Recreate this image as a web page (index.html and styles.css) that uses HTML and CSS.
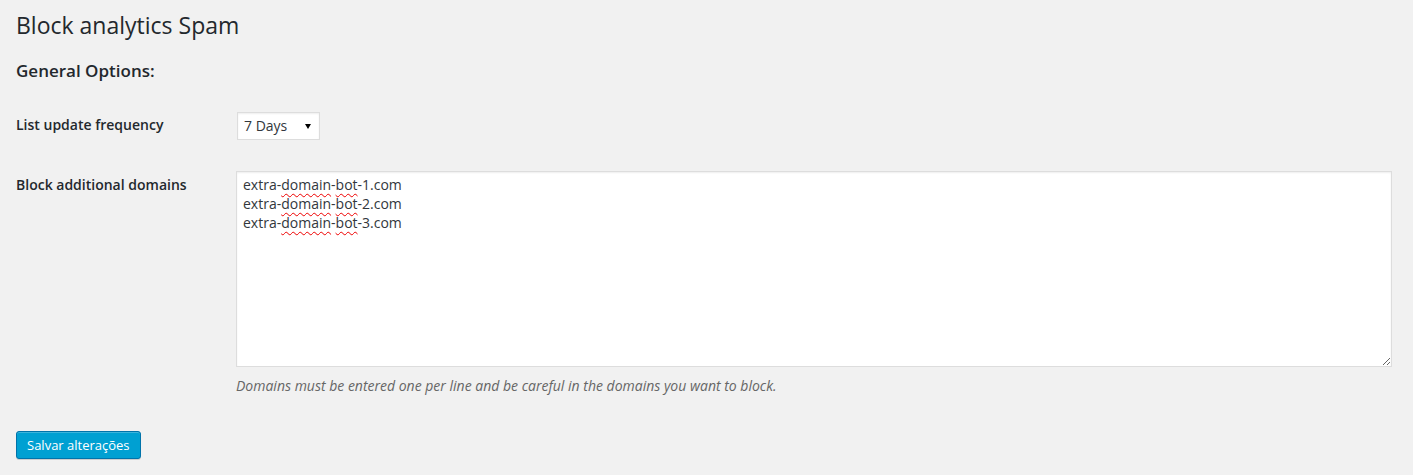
FILE: index.html
```html
<!DOCTYPE html>
<html lang="en">
<head>
    <meta charset="UTF-8">
    <title>Block analytics Spam</title>
    <link rel="stylesheet" href="styles.css">
</head>
<body>
    <div class="wrap">
        <h1>Block analytics Spam</h1>
        <h2>General Options:</h2>
        <form>
            <table class="form-table">
                <tr>
                    <th><label for="frequency">List update frequency</label></th>
                    <td>
                        <span class="select-wrap">
                            <select id="frequency" name="frequency">
                                <option>7 Days</option>
                            </select>
                        </span>
                    </td>
                </tr>
                <tr>
                    <th><label for="domains">Block additional domains</label></th>
                    <td>
                        <div class="textarea" id="domains">
                            <div>extra-<span class="typo">domain</span>-<span class="typo">bot</span>-1.com</div>
                            <div>extra-<span class="typo">domain</span>-<span class="typo">bot</span>-2.com</div>
                            <div>extra-<span class="typo">domain</span>-<span class="typo">bot</span>-3.com</div>
                        </div>
                        <p class="description">Domains must be entered one per line and be careful in the domains you want to block.</p>
                    </td>
                </tr>
            </table>
            <p class="submit">
                <button type="button" class="button-primary">Salvar alterações</button>
            </p>
        </form>
    </div>
</body>
</html>
```

FILE: styles.css
```css
body {
    margin: 0;
    background-color: #f1f1f1;
    color: #23282d;
    font-family: "Open Sans", sans-serif;
    font-size: 13px;
    line-height: 1.4em;
}
.wrap {
    padding: 0 11px 0 16px;
}
h1 {
    margin: 0;
    padding: 11px 0 4px;
    font-size: 23px;
    font-weight: 400;
    line-height: 29px;
}
h2 {
    margin: 16px 0 0;
    font-size: 17px;
    font-weight: 600;
    line-height: 22px;
}
.form-table {
    width: 100%;
    border-collapse: collapse;
    margin-top: 14px;
}
.form-table th {
    width: 200px;
    padding: 20px 10px 20px 0;
    text-align: left;
    vertical-align: top;
    font-size: 14px;
    font-weight: 600;
    line-height: 18px;
}
.form-table td {
    padding: 15px 10px;
    vertical-align: middle;
    line-height: 18px;
}
.select-wrap {
    position: relative;
    display: inline-block;
    margin: 1px;
}
.select-wrap::after {
    content: "";
    position: absolute;
    right: 9px;
    top: 12px;
    border-left: 3.5px solid transparent;
    border-right: 3.5px solid transparent;
    border-top: 5px solid #000;
    pointer-events: none;
}
select {
    appearance: none;
    -webkit-appearance: none;
    display: block;
    width: 83px;
    height: 28px;
    margin: 0;
    padding: 0 0 2px 6px;
    border: 1px solid #ddd;
    border-radius: 0;
    box-shadow: inset 0 1px 2px rgba(0, 0, 0, 0.07);
    background-color: #fff;
    color: #32373c;
    font-family: "Open Sans", sans-serif;
    font-size: 14px;
}
.textarea {
    box-sizing: border-box;
    width: 100%;
    height: 196px;
    padding: 3px 6px;
    border: 1px solid #ddd;
    box-shadow: inset 0 1px 2px rgba(0, 0, 0, 0.07);
    background-color: #fff;
    color: #32373c;
    font-size: 14px;
    line-height: 19px;
    overflow: auto;
    resize: vertical;
}
.typo {
    text-decoration: underline wavy #e00;
    text-decoration-thickness: 1px;
    text-underline-offset: 3px;
}
.description {
    margin: 9px 0 5px;
    color: #666;
    font-size: 14px;
    font-style: italic;
    line-height: 19px;
}
.submit {
    margin: 0;
    padding: 16px 0 16px;
}
.button-primary {
    height: 28px;
    margin: 0;
    padding: 0 10px 1px;
    border: 1px solid #0073aa;
    border-radius: 3px;
    background-color: #00a0d2;
    box-shadow: inset 0 1px 0 rgba(120, 200, 230, 0.5), 0 1px 0 rgba(0, 0, 0, 0.15);
    color: #fff;
    font-family: "Open Sans", sans-serif;
    font-size: 13px;
    line-height: 26px;
    cursor: pointer;
}
```
